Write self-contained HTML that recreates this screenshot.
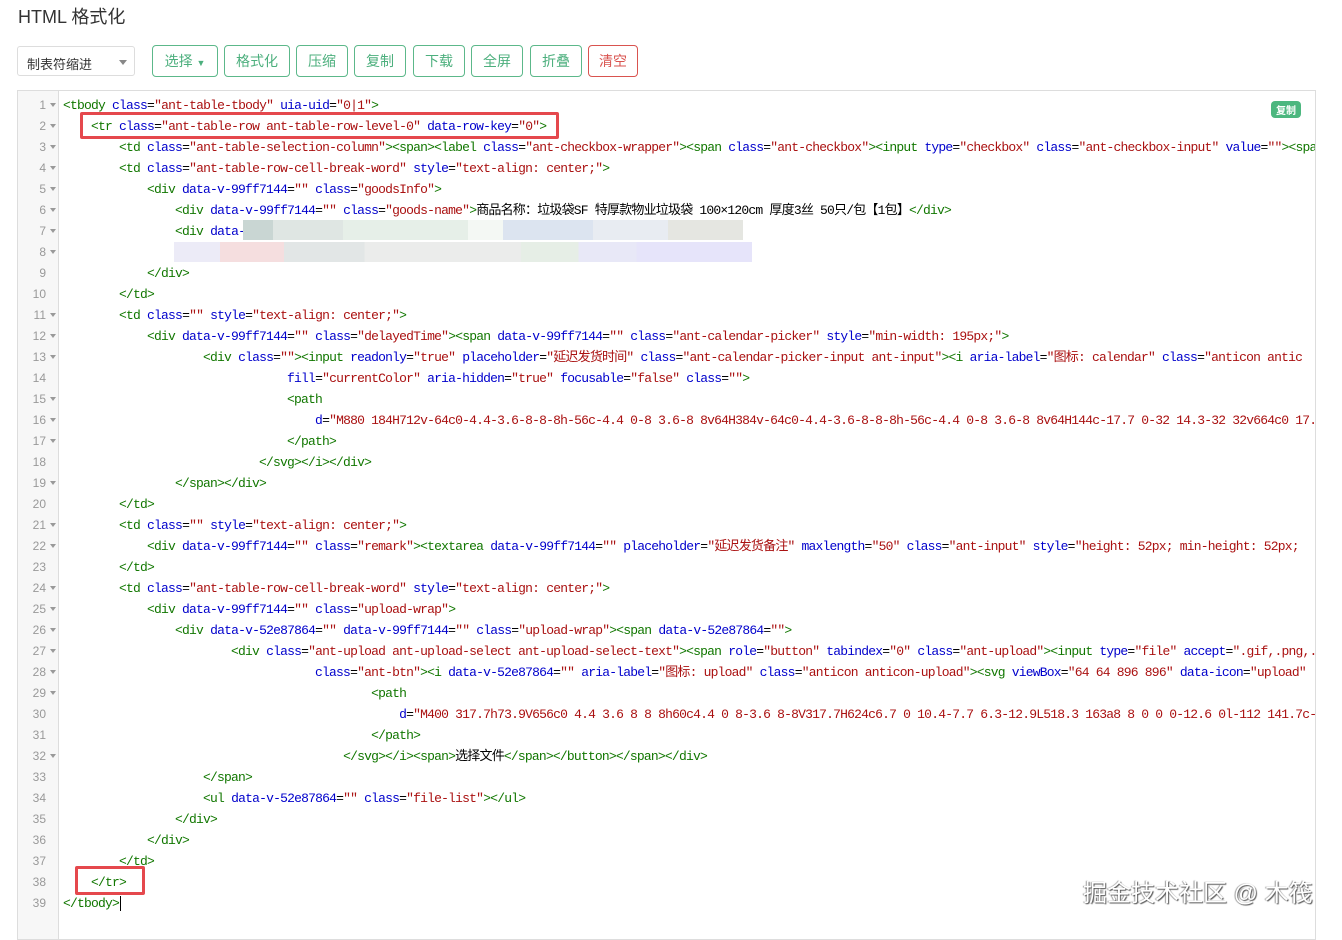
<!DOCTYPE html>
<html><head><meta charset="utf-8">
<style>
body{margin:0;background:#fff;width:1342px;height:929px;overflow:hidden;font-family:"Liberation Sans","Noto Sans CJK SC",sans-serif;}
h1{position:absolute;left:18px;top:3px;margin:0;font-size:18px;font-weight:normal;color:#333;}
.sel{position:absolute;left:17px;top:46px;width:118px;height:30px;border:1px solid #ddd;border-radius:3px;box-sizing:border-box;font-size:13px;color:#333;padding:7px 9px;}
.sel:after{content:"";position:absolute;right:7px;top:13px;border:4px solid transparent;border-top:5px solid #888;}
.btn{position:absolute;top:45px;height:32px;border:1px solid #5cb88a;border-radius:4px;box-sizing:border-box;color:#4caf7d;font-size:14px;text-align:center;line-height:30px;}
.btn.r{border-color:#d9534f;color:#d9534f;}
.ed{position:absolute;left:17px;top:90px;width:1299px;height:850px;border:1px solid #ddd;box-sizing:border-box;overflow:hidden;}
.gut{position:absolute;left:0;top:0;width:40px;height:100%;background:#f7f7f7;border-right:1px solid #ddd;}
.ln{position:absolute;left:0;width:28px;text-align:right;font-family:"Liberation Sans",sans-serif;font-size:12px;color:#999;}
.ln i{position:absolute;left:32px;top:8px;border:3px solid transparent;border-top:4px solid #999;}
.code{position:absolute;left:45px;top:4px;font-family:"Liberation Mono","Noto Sans CJK SC",monospace;font-size:13px;letter-spacing:-0.8px;color:#000;}
.code div{white-space:pre;height:21px;line-height:21px;}
.t{color:#170}.a{color:#00c}.s{color:#a11}
.cp{position:absolute;right:14px;top:10px;background:#4cb77f;color:#fff;font-size:10px;font-weight:bold;border-radius:4px;padding:1px 5px;}
.box{position:absolute;border:3px solid #e5484d;border-radius:2px;box-sizing:border-box;}
.blur{position:absolute;}
.wm{position:absolute;left:1083px;top:873px;font-size:24px;color:#fff;text-shadow:1px 1px 1px #555,-1px 0 1px #999;}
</style></head><body>
<h1>HTML 格式化</h1>
<div class="sel">制表符缩进</div>
<div class="btn" style="left:152px;width:66px">选择 <span style="font-size:9px">▼</span></div>
<div class="btn" style="left:224px;width:66px">格式化</div>
<div class="btn" style="left:296px;width:52px">压缩</div>
<div class="btn" style="left:354px;width:52px">复制</div>
<div class="btn" style="left:413px;width:52px">下载</div>
<div class="btn" style="left:471px;width:52px">全屏</div>
<div class="btn" style="left:530px;width:52px">折叠</div>
<div class="btn r" style="left:588px;width:50px">清空</div>
<div class="ed">
<div class="gut"></div>
<div id="lns"></div>
<div class="code"><div><span class="t">&lt;tbody</span> <span class="a">class</span>=<span class="s">"ant-table-tbody"</span> <span class="a">uia-uid</span>=<span class="s">"0|1"</span><span class="t">&gt;</span></div><div>    <span class="t">&lt;tr</span> <span class="a">class</span>=<span class="s">"ant-table-row ant-table-row-level-0"</span> <span class="a">data-row-key</span>=<span class="s">"0"</span><span class="t">&gt;</span></div><div>        <span class="t">&lt;td</span> <span class="a">class</span>=<span class="s">"ant-table-selection-column"</span><span class="t">&gt;&lt;span&gt;&lt;label</span> <span class="a">class</span>=<span class="s">"ant-checkbox-wrapper"</span><span class="t">&gt;&lt;span</span> <span class="a">class</span>=<span class="s">"ant-checkbox"</span><span class="t">&gt;&lt;input</span> <span class="a">type</span>=<span class="s">"checkbox"</span> <span class="a">class</span>=<span class="s">"ant-checkbox-input"</span> <span class="a">value</span>=<span class="s">""</span><span class="t">&gt;&lt;span</span></div><div>        <span class="t">&lt;td</span> <span class="a">class</span>=<span class="s">"ant-table-row-cell-break-word"</span> <span class="a">style</span>=<span class="s">"text-align: center;"</span><span class="t">&gt;</span></div><div>            <span class="t">&lt;div</span> <span class="a">data-v-99ff7144</span>=<span class="s">""</span> <span class="a">class</span>=<span class="s">"goodsInfo"</span><span class="t">&gt;</span></div><div>                <span class="t">&lt;div</span> <span class="a">data-v-99ff7144</span>=<span class="s">""</span> <span class="a">class</span>=<span class="s">"goods-name"</span><span class="t">&gt;</span>商品名称：垃圾袋SF 特厚款物业垃圾袋 100×120cm 厚度3丝 50只/包【1包】<span class="t">&lt;/div&gt;</span></div><div>                <span class="t">&lt;div</span> <span class="a">data-</span></div><div> </div><div>            <span class="t">&lt;/div&gt;</span></div><div>        <span class="t">&lt;/td&gt;</span></div><div>        <span class="t">&lt;td</span> <span class="a">class</span>=<span class="s">""</span> <span class="a">style</span>=<span class="s">"text-align: center;"</span><span class="t">&gt;</span></div><div>            <span class="t">&lt;div</span> <span class="a">data-v-99ff7144</span>=<span class="s">""</span> <span class="a">class</span>=<span class="s">"delayedTime"</span><span class="t">&gt;&lt;span</span> <span class="a">data-v-99ff7144</span>=<span class="s">""</span> <span class="a">class</span>=<span class="s">"ant-calendar-picker"</span> <span class="a">style</span>=<span class="s">"min-width: 195px;"</span><span class="t">&gt;</span></div><div>                    <span class="t">&lt;div</span> <span class="a">class</span>=<span class="s">""</span><span class="t">&gt;&lt;input</span> <span class="a">readonly</span>=<span class="s">"true"</span> <span class="a">placeholder</span>=<span class="s">"延迟发货时间"</span> <span class="a">class</span>=<span class="s">"ant-calendar-picker-input ant-input"</span><span class="t">&gt;&lt;i</span> <span class="a">aria-label</span>=<span class="s">"图标: calendar"</span> <span class="a">class</span>=<span class="s">"anticon antic</span></div><div>                                <span class="a">fill</span>=<span class="s">"currentColor"</span> <span class="a">aria-hidden</span>=<span class="s">"true"</span> <span class="a">focusable</span>=<span class="s">"false"</span> <span class="a">class</span>=<span class="s">""</span><span class="t">&gt;</span></div><div>                                <span class="t">&lt;path</span></div><div>                                    <span class="a">d</span>=<span class="s">"M880 184H712v-64c0-4.4-3.6-8-8-8h-56c-4.4 0-8 3.6-8 8v64H384v-64c0-4.4-3.6-8-8-8h-56c-4.4 0-8 3.6-8 8v64H144c-17.7 0-32 14.3-32 32v664c0 17.</span></div><div>                                <span class="t">&lt;/path&gt;</span></div><div>                            <span class="t">&lt;/svg&gt;&lt;/i&gt;&lt;/div&gt;</span></div><div>                <span class="t">&lt;/span&gt;&lt;/div&gt;</span></div><div>        <span class="t">&lt;/td&gt;</span></div><div>        <span class="t">&lt;td</span> <span class="a">class</span>=<span class="s">""</span> <span class="a">style</span>=<span class="s">"text-align: center;"</span><span class="t">&gt;</span></div><div>            <span class="t">&lt;div</span> <span class="a">data-v-99ff7144</span>=<span class="s">""</span> <span class="a">class</span>=<span class="s">"remark"</span><span class="t">&gt;&lt;textarea</span> <span class="a">data-v-99ff7144</span>=<span class="s">""</span> <span class="a">placeholder</span>=<span class="s">"延迟发货备注"</span> <span class="a">maxlength</span>=<span class="s">"50"</span> <span class="a">class</span>=<span class="s">"ant-input"</span> <span class="a">style</span>=<span class="s">"height: 52px; min-height: 52px;</span></div><div>        <span class="t">&lt;/td&gt;</span></div><div>        <span class="t">&lt;td</span> <span class="a">class</span>=<span class="s">"ant-table-row-cell-break-word"</span> <span class="a">style</span>=<span class="s">"text-align: center;"</span><span class="t">&gt;</span></div><div>            <span class="t">&lt;div</span> <span class="a">data-v-99ff7144</span>=<span class="s">""</span> <span class="a">class</span>=<span class="s">"upload-wrap"</span><span class="t">&gt;</span></div><div>                <span class="t">&lt;div</span> <span class="a">data-v-52e87864</span>=<span class="s">""</span> <span class="a">data-v-99ff7144</span>=<span class="s">""</span> <span class="a">class</span>=<span class="s">"upload-wrap"</span><span class="t">&gt;&lt;span</span> <span class="a">data-v-52e87864</span>=<span class="s">""</span><span class="t">&gt;</span></div><div>                        <span class="t">&lt;div</span> <span class="a">class</span>=<span class="s">"ant-upload ant-upload-select ant-upload-select-text"</span><span class="t">&gt;&lt;span</span> <span class="a">role</span>=<span class="s">"button"</span> <span class="a">tabindex</span>=<span class="s">"0"</span> <span class="a">class</span>=<span class="s">"ant-upload"</span><span class="t">&gt;&lt;input</span> <span class="a">type</span>=<span class="s">"file"</span> <span class="a">accept</span>=<span class="s">".gif,.png,.</span></div><div>                                    <span class="a">class</span>=<span class="s">"ant-btn"</span><span class="t">&gt;&lt;i</span> <span class="a">data-v-52e87864</span>=<span class="s">""</span> <span class="a">aria-label</span>=<span class="s">"图标: upload"</span> <span class="a">class</span>=<span class="s">"anticon anticon-upload"</span><span class="t">&gt;&lt;svg</span> <span class="a">viewBox</span>=<span class="s">"64 64 896 896"</span> <span class="a">data-icon</span>=<span class="s">"upload"</span></div><div>                                            <span class="t">&lt;path</span></div><div>                                                <span class="a">d</span>=<span class="s">"M400 317.7h73.9V656c0 4.4 3.6 8 8 8h60c4.4 0 8-3.6 8-8V317.7H624c6.7 0 10.4-7.7 6.3-12.9L518.3 163a8 8 0 0 0-12.6 0l-112 141.7c-</span></div><div>                                            <span class="t">&lt;/path&gt;</span></div><div>                                        <span class="t">&lt;/svg&gt;&lt;/i&gt;&lt;span&gt;</span>选择文件<span class="t">&lt;/span&gt;&lt;/button&gt;&lt;/span&gt;&lt;/div&gt;</span></div><div>                    <span class="t">&lt;/span&gt;</span></div><div>                    <span class="t">&lt;ul</span> <span class="a">data-v-52e87864</span>=<span class="s">""</span> <span class="a">class</span>=<span class="s">"file-list"</span><span class="t">&gt;&lt;/ul&gt;</span></div><div>                <span class="t">&lt;/div&gt;</span></div><div>            <span class="t">&lt;/div&gt;</span></div><div>        <span class="t">&lt;/td&gt;</span></div><div>    <span class="t">&lt;/tr&gt;</span></div><div><span class="t">&lt;/tbody&gt;</span><span style="border-left:1px solid #000;margin-left:1px"></span></div></div>
<div class="cp">复制</div>
</div>
<div class="blur" style="left:243px;top:220px;width:500px;height:20px;background:linear-gradient(90deg,#c9d6d3 0 6%,#dfe6e3 6% 20%,#e6efe8 20% 45%,#f4f8f4 45% 52%,#dce4f0 52% 70%,#e8ecf2 70% 85%,#e5e6e1 85%);"></div>
<div class="blur" style="left:174px;top:242px;width:578px;height:20px;background:linear-gradient(90deg,#ecebf7 0 8%,#f5dedf 8% 19%,#e2e6e6 19% 33%,#ebeceb 33% 60%,#e6eee6 60% 70%,#e8e8f7 70% 80%,#e6e4fa 80%);"></div>
<div class="box" style="left:80px;top:112px;width:479px;height:27px"></div>
<div class="box" style="left:75px;top:866px;width:70px;height:29px"></div>
<div class="wm">掘金技术社区 @ 木筏</div>
<script>
var h='';for(var i=1;i<=39;i++){var f=[9,10,14,18,20,23,30,31,33,34,35,36,37,38,39].indexOf(i)<0;h+='<div class="ln" style="top:'+(4+(i-1)*21)+'px;line-height:21px">'+i+(f?'<i></i>':'')+'</div>';}
document.getElementById('lns').innerHTML=h;
</script>
</body></html>
